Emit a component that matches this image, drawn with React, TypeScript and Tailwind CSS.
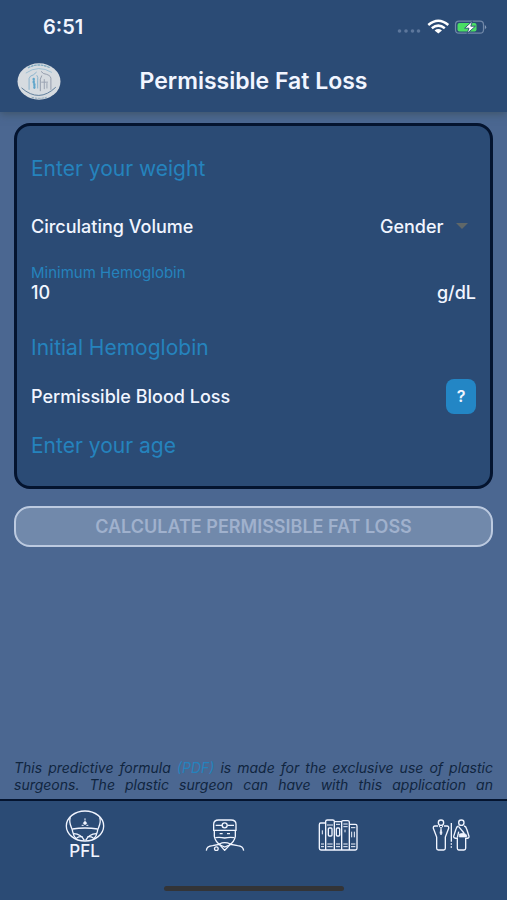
import type { ReactNode } from 'react'

function Logo() {
  return (
    <svg viewBox="0 0 132 112" className="h-[37px] w-11" aria-hidden="true">
      <ellipse cx="66" cy="56" rx="65" ry="55" fill="#d6dbe0" />
      <g fill="none" strokeLinecap="round">
        <path d="M34 14 Q64 -2 98 14" stroke="#7fa9c0" strokeWidth="4" strokeDasharray="5 5" />
        <path d="M27 30 Q64 4 104 28" stroke="#7fb0cc" strokeWidth="2" />
        <path d="M14 76 Q66 122 116 74" stroke="#5f7d9b" strokeWidth="3" />
        <path d="M45 104 Q66 110 88 104" stroke="#8ba4b6" strokeWidth="3" strokeDasharray="5 5" />
        <path d="M36 80 V47 Q38 38 49 36 L58 28 M60 38 Q64 43 62 52 V76" stroke="#78aac8" strokeWidth="2.5" />
        <path d="M50 48 V60 M52 64 V78" stroke="#5ea5cb" strokeWidth="7" strokeDasharray="3 5" />
        <path d="M73 26 L80 32 Q101 36 102 46 V80 M74 39 L70 49 V84" stroke="#858fa2" strokeWidth="2.5" />
        <path d="M74 58 H92 M82 50 V78 M90 62 V76" stroke="#9aa3b2" strokeWidth="3" />
      </g>
    </svg>
  )
}

function StatusIcons() {
  return (
    <svg viewBox="0 0 92 16" className="h-4 w-[92px]" aria-hidden="true">
      <g fill="#5d779c">
        <circle cx="4.5" cy="12" r="1.8" />
        <circle cx="11" cy="12" r="1.8" />
        <circle cx="17.5" cy="12" r="1.8" />
        <circle cx="23.5" cy="12" r="1.8" />
      </g>
      <g fill="none" stroke="#fff" strokeWidth="2.5">
        <path d="M33.3 6 Q43.3 -2.6 53.3 6" />
        <path d="M36.8 9.2 Q43.3 4 49.8 9.2" />
      </g>
      <path d="M39.6 11.4 Q43.3 8.6 47 11.4 L43.3 14.6 Z" fill="#fff" />
      <rect x="60.5" y="2.2" width="28" height="12" rx="3.5" fill="none" stroke="#7188a8" strokeWidth="1.2" />
      <path d="M89.8 6 Q92.6 8.2 89.8 10.4 Z" fill="#8498b5" />
      <rect x="62.5" y="4" width="19" height="8.4" rx="2" fill="#4ade64" />
      <path d="M77.5 2 L69.6 9.2 H74 L72 14.6 L80.4 7.2 H75.8 Z" fill="#fff" stroke="#2b4b75" strokeWidth=".9" />
    </svg>
  )
}

function BodyIcon() {
  return (
    <svg viewBox="0 0 118 96" className="h-8 w-10" fill="none" stroke="currentColor" strokeWidth="4" aria-hidden="true">
      <ellipse cx="59" cy="48" rx="56" ry="45" />
      <path d="M15 22 C8 42 21 52 22 65 C24 77 28 83 34 88" />
      <path d="M103 22 C110 42 97 52 96 65 C94 77 90 83 84 88" />
      <path d="M21 57 Q59 51 97 57" />
      <path d="M25 71 Q47 72 57 91 M93 71 Q71 72 61 91 M34 84 Q42 78 52 80 M84 84 Q76 78 66 80" />
      <path d="M59 25 V31 M49 46 H55 M63 46 H69" strokeWidth="3" />
      <path d="M59 32 L65 40 L59 45 L53 40 Z" fill="currentColor" strokeWidth="1" />
    </svg>
  )
}

function SurgeonIcon() {
  return (
    <svg viewBox="0 0 118 96" className="h-8 w-10" fill="none" stroke="currentColor" strokeWidth="4" aria-hidden="true">
      <path d="M25 34 V16 Q25 3 40 3 H77 Q92 3 92 16 V34 Z" />
      <path d="M31 19 H50 M66 19 H86" />
      <circle cx="58" cy="19" r="7.5" />
      <path d="M27 34 V52 Q30 68 45 78 L58 84 L72 78 Q87 68 90 52 V34" />
      <path d="M43 44 H52 M65 44 H74 M30 56 Q44 54 58 57 Q73 54 87 56 M42 75 Q58 67 75 75" />
      <path d="M3 95 Q4 81 22 80 L42 76 L58 94 L75 76 L97 80 Q113 81 115 95" />
      <circle cx="33" cy="89" r="5.5" />
    </svg>
  )
}

function BooksIcon() {
  return (
    <svg viewBox="0 0 118 96" className="h-8 w-10" fill="none" stroke="currentColor" strokeWidth="4" aria-hidden="true">
      <path d="M22 12 H7 Q3 12 3 17 V88 Q3 93 8 93 H111 Q116 93 116 88 V21 Q116 16 111 16 H94" />
      <path d="M22 93 V7 Q22 3 27 3 H43 Q48 3 48 7 V93 M48 8 H70 M70 93 V9 Q70 5 74 5 H88 Q93 5 93 9 V93" />
      <path d="M8 75 H17 M8 83 H17 M27 75 H43 M27 83 H43 M53 75 H65 M53 83 H65 M75 75 H88 M75 83 H88 M98 75 H111 M98 83 H111" strokeWidth="3" />
      <path d="M12 34 V46 M26 18 H44 M53 16 H65 M75 15 H88 M75 23 H88 M80 32 V40 M98 26 H111 M100 38 V55 M108 38 V55" strokeWidth="3" />
      <rect x="30" y="27" width="11" height="24" rx="3" />
      <rect x="54" y="27" width="10" height="24" rx="3" />
    </svg>
  )
}

function PatientsIcon() {
  return (
    <svg viewBox="0 0 118 96" className="h-8 w-10" fill="none" stroke="currentColor" strokeWidth="4" aria-hidden="true">
      <circle cx="29" cy="11" r="8" />
      <path d="M20 21 H11 Q5 21 6 28 L16 54 V88 Q16 93 21 93 H37 Q42 93 42 88 V54 L52 28 Q53 21 47 21 H38" />
      <path d="M23 21 L29 28 L35 21" strokeWidth="3" />
      <path d="M29 28 L26 42 L29 48 L32 42 Z" fill="currentColor" strokeWidth="2" />
      <path d="M60 12 V68 M60 73 V77 M60 82 V86" />
      <circle cx="90" cy="11" r="8" />
      <path d="M82 21 Q76 22 74 30 L67 52 Q66 58 78 58 V88 Q78 93 82 93 H98 Q103 93 103 88 V58 Q115 58 113 52 L106 30 Q104 22 98 21" />
      <path d="M82 23 L98 42 M82 38 L78 56" />
      <path d="M84 45 L98 42 L106 48 V54 H84 Z" fill="currentColor" strokeWidth="2" />
    </svg>
  )
}

function NavButton({ label, children }: { label: string; children: ReactNode }) {
  return (
    <button type="button" aria-label={label} className="flex flex-2 items-center justify-center">
      {children}
    </button>
  )
}

const fieldClass =
  'h-12 w-full bg-transparent text-[21px] text-[#2583bd] placeholder:text-[#2583bd] placeholder:opacity-100 outline-none'

export default function App() {
  return (
    <div className="flex min-h-screen flex-col bg-[#4b6791] font-['Inter',sans-serif] text-[#f1f5ff]">
      <header className="bg-[#2b4b75] shadow-[0_2px_8px_rgba(60,80,95,0.8)]">
        <div className="flex h-[50px] items-center justify-between pt-1 pr-5 pl-[43px]">
          <span className="text-[20px] font-semibold">6:51</span>
          <StatusIcons />
        </div>
        <div className="grid h-[62px] grid-cols-[44px_1fr_44px] items-center px-[17px]">
          <Logo />
          <h1 className="text-center text-[23px] font-semibold whitespace-nowrap">Permissible Fat Loss</h1>
        </div>
      </header>

      <main className="flex flex-1 flex-col px-3.5 pt-[11px]">
        <form className="flex flex-1 flex-col">
          <div className="rounded-2xl border-3 border-[#04142f] bg-[#2b4b75] px-3.5 pt-[18px] pb-[17px]">
            <input type="text" aria-label="Weight" placeholder="Enter your weight" className={fieldClass} />

            <div className="flex h-[68px] items-center justify-between text-[18px] font-medium">
              <label htmlFor="gender">Circulating Volume</label>
              <div className="flex items-center gap-3 pr-2">
                <select id="gender" defaultValue="" className="appearance-none bg-transparent outline-none">
                  <option value="">Gender</option>
                </select>
                <svg viewBox="0 0 12 6" className="h-1.5 w-3" aria-hidden="true">
                  <path d="M0 0 H12 L6 6 Z" fill="#5f6768" />
                </svg>
              </div>
            </div>

            <div className="h-[63px] pt-1">
              <label htmlFor="minimum" className="block text-[15px] leading-[18px] text-[#2583bd]">
                Minimum Hemoglobin
              </label>
              <div className="flex items-center justify-between text-[18px] leading-[22px] font-medium">
                <input id="minimum" type="text" defaultValue="10" className="w-24 bg-transparent outline-none" />
                <span>g/dL</span>
              </div>
            </div>

            <input type="text" aria-label="Initial Hemoglobin" placeholder="Initial Hemoglobin" className={fieldClass} />

            <div className="flex h-[50px] items-center justify-between text-[18px] font-medium">
              <span>Permissible Blood Loss</span>
              <button
                type="button"
                aria-label="About permissible blood loss"
                className="h-[35px] w-[30px] rounded-lg bg-[#2386c5] text-[16px] font-semibold"
              >
                ?
              </button>
            </div>

            <input type="text" aria-label="Age" placeholder="Enter your age" className={fieldClass} />
          </div>

          <button
            type="submit"
            disabled
            className="mt-[17px] h-[41px] rounded-2xl border-2 border-[#bccae0] bg-[#7189ab] text-[18px] font-semibold text-[#a0b1cd]"
          >
            CALCULATE PERMISSIBLE FAT LOSS
          </button>
        </form>

        <p className="pb-1.5 text-justify text-[14px] leading-[17px] text-[#10253f] italic [text-align-last:justify]">
          This predictive formula{' '}
          <a href="#formula" className="text-[#2583bd]">
            (PDF)
          </a>{' '}
          is made for the exclusive use of plastic
          <br />
          surgeons. The plastic surgeon can have with this application an
        </p>
      </main>

      <nav className="border-t-2 border-[#04142f] bg-[#2b4b75]">
        <div className="flex h-[68px]">
          <button type="button" className="flex flex-3 flex-col items-center justify-center text-[17px] leading-[18px] font-medium">
            <BodyIcon />
            PFL
          </button>
          <NavButton label="Surgeon">
            <SurgeonIcon />
          </NavButton>
          <NavButton label="Library">
            <BooksIcon />
          </NavButton>
          <NavButton label="Patients">
            <PatientsIcon />
          </NavButton>
        </div>
        <div className="flex justify-center pt-[17px] pb-[9px]">
          <div className="h-[5px] w-[180px] rounded-sm bg-[#333437]" />
        </div>
      </nav>
    </div>
  )
}
